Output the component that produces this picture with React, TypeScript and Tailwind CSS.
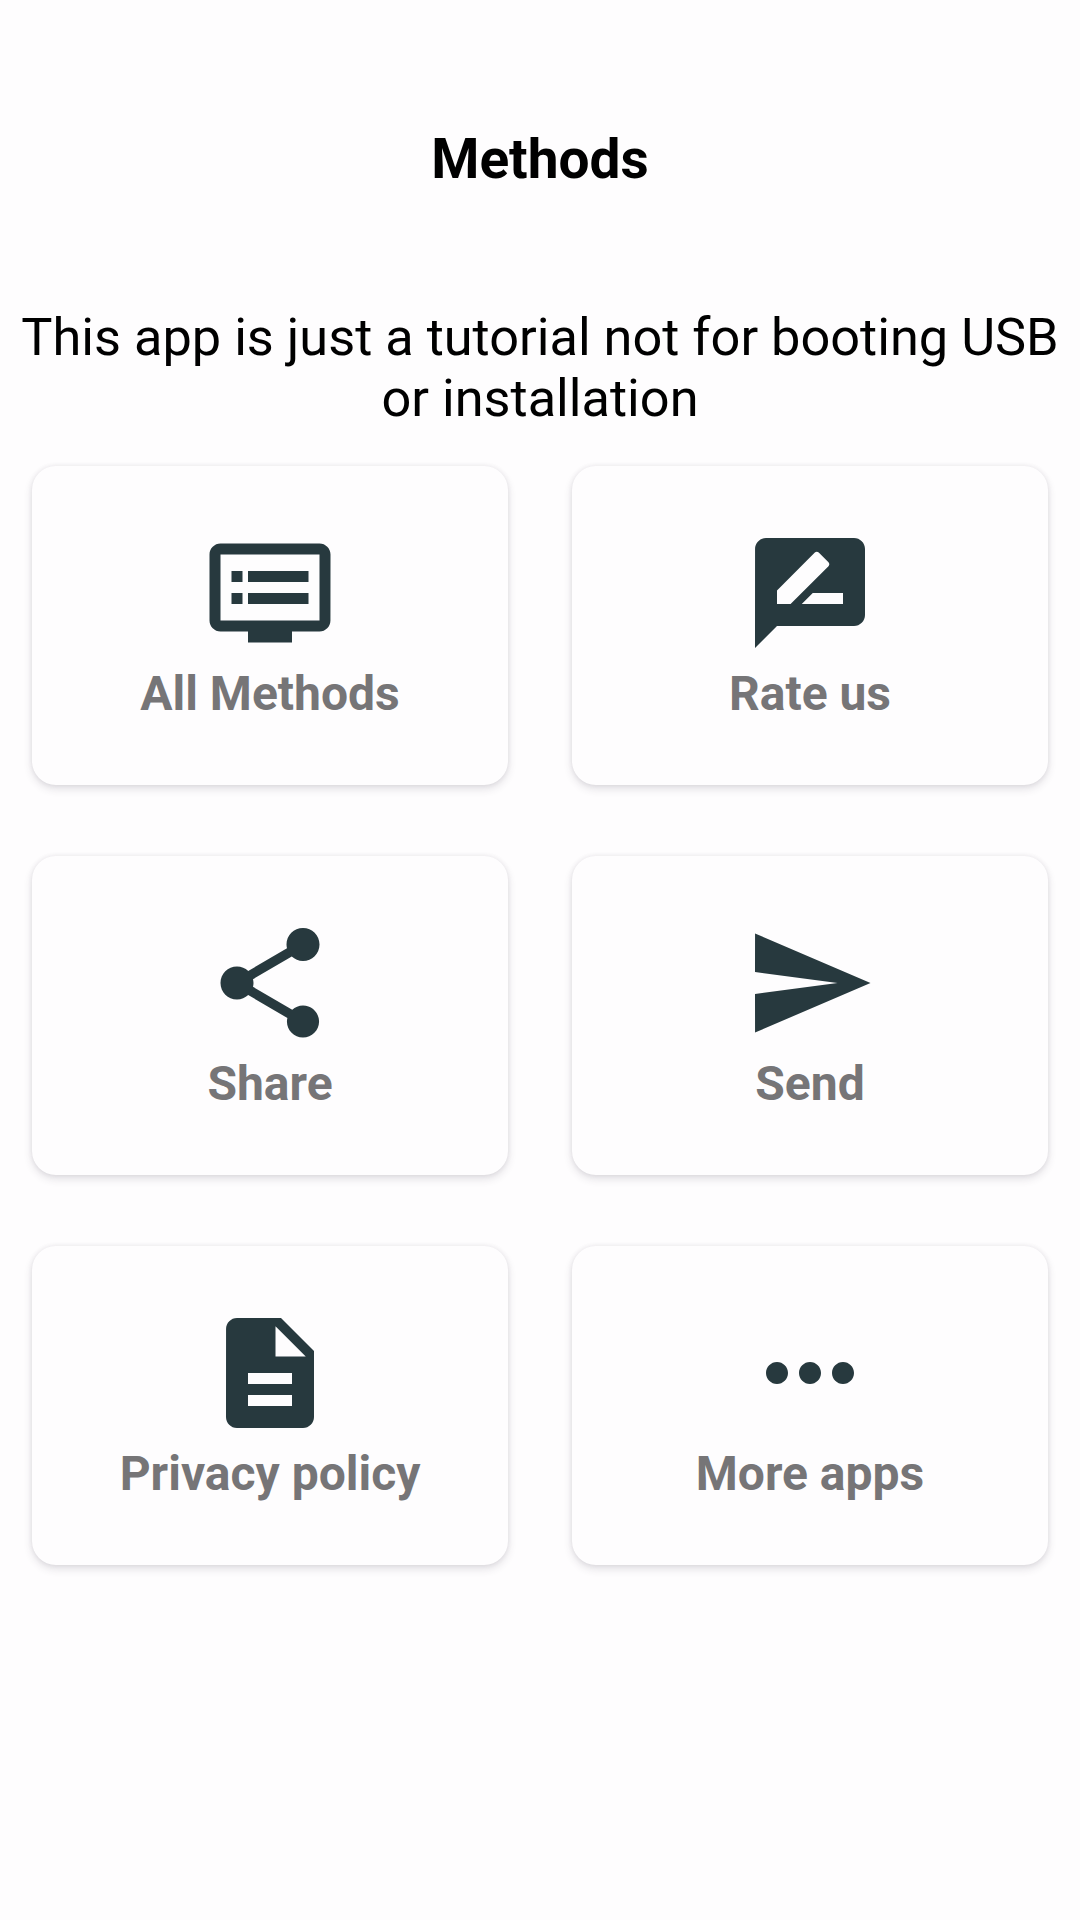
const paths = {
  dvr: 'M21 3H3c-1.1 0-2 .9-2 2v12c0 1.1.9 2 2 2h5v2h8v-2h5c1.1 0 1.99-.9 1.99-2L23 5c0-1.1-.9-2-2-2zm0 14H3V5h18v12zm-2-9H8v2h11V8zm0 4H8v2h11v-2zM7 8H5v2h2V8zm0 4H5v2h2v-2z',
  rate: 'M20 2H4c-1.1 0-1.99.9-1.99 2L2 22l4-4h14c1.1 0 2-.9 2-2V4c0-1.1-.9-2-2-2zM6 14v-2.47l6.88-6.88c.2-.2.51-.2.71 0l1.77 1.77c.2.2.2.51 0 .71L8.47 14H6zm12 0h-7.5l2-2H18v2z',
  share: 'M18 16.08c-.76 0-1.44.3-1.96.77L8.91 12.7c.05-.23.09-.46.09-.7s-.04-.47-.09-.7l7.05-4.11c.54.5 1.25.81 2.04.81 1.66 0 3-1.34 3-3s-1.34-3-3-3-3 1.34-3 3c0 .24.04.47.09.7L8.04 9.81C7.5 9.31 6.79 9 6 9c-1.66 0-3 1.34-3 3s1.34 3 3 3c.79 0 1.5-.31 2.04-.81l7.12 4.16c-.05.21-.08.43-.08.65 0 1.61 1.31 2.92 2.92 2.92 1.61 0 2.92-1.31 2.92-2.92s-1.31-2.92-2.92-2.92z',
  send: 'M2.01 21L23 12 2.01 3 2 10l15 2-15 2z',
  doc: 'M14 2H6c-1.1 0-1.99.9-1.99 2L4 20c0 1.1.89 2 1.99 2H18c1.1 0 2-.9 2-2V8l-6-6zm2 16H8v-2h8v2zm0-4H8v-2h8v2zm-3-5V3.5L18.5 9H13z',
  more: 'M6 10c-1.1 0-2 .9-2 2s.9 2 2 2 2-.9 2-2-.9-2-2-2zm12 0c-1.1 0-2 .9-2 2s.9 2 2 2 2-.9 2-2-.9-2-2-2zm-6 0c-1.1 0-2 .9-2 2s.9 2 2 2 2-.9 2-2-.9-2-2-2z',
};

const items = [
  { label: 'All Methods', icon: paths.dvr },
  { label: 'Rate us', icon: paths.rate },
  { label: 'Share', icon: paths.share },
  { label: 'Send', icon: paths.send },
  { label: 'Privacy policy', icon: paths.doc },
  { label: 'More apps', icon: paths.more },
];

function Card({ label, icon }: { label: string; icon: string }) {
  return (
    <div className="h-[319px] rounded-[24px] bg-[#fefdfe] shadow-[0_0_5px_rgba(70,50,80,0.09),0_4px_8px_rgba(60,50,70,0.14)] flex flex-col items-center pt-[61px]">
      <svg viewBox="0 0 24 24" className="w-[132px] h-[132px] fill-[#27393e]">
        <path d={icon} />
      </svg>
      <div className="mt-[8px] text-[48px] leading-[54px] font-bold text-[#767577]">{label}</div>
    </div>
  );
}

export default function App() {
  return (
    <div className="w-[1080px] h-[1920px] bg-[#fefdfe] font-['Roboto',sans-serif] overflow-hidden">
      <h1 className="pt-[127px] text-center text-[55px] leading-[64px] font-bold text-black">Methods</h1>
      <p className="mt-[116px] px-[10px] text-center text-[52.3px] leading-[61px] text-black">
        This app is just a tutorial not for booting USB or installation
      </p>
      <div className="mt-[37px] px-[32px] grid grid-cols-2 gap-x-[64px] gap-y-[71px]">
        {items.map((item) => (
          <Card key={item.label} {...item} />
        ))}
      </div>
    </div>
  );
}
